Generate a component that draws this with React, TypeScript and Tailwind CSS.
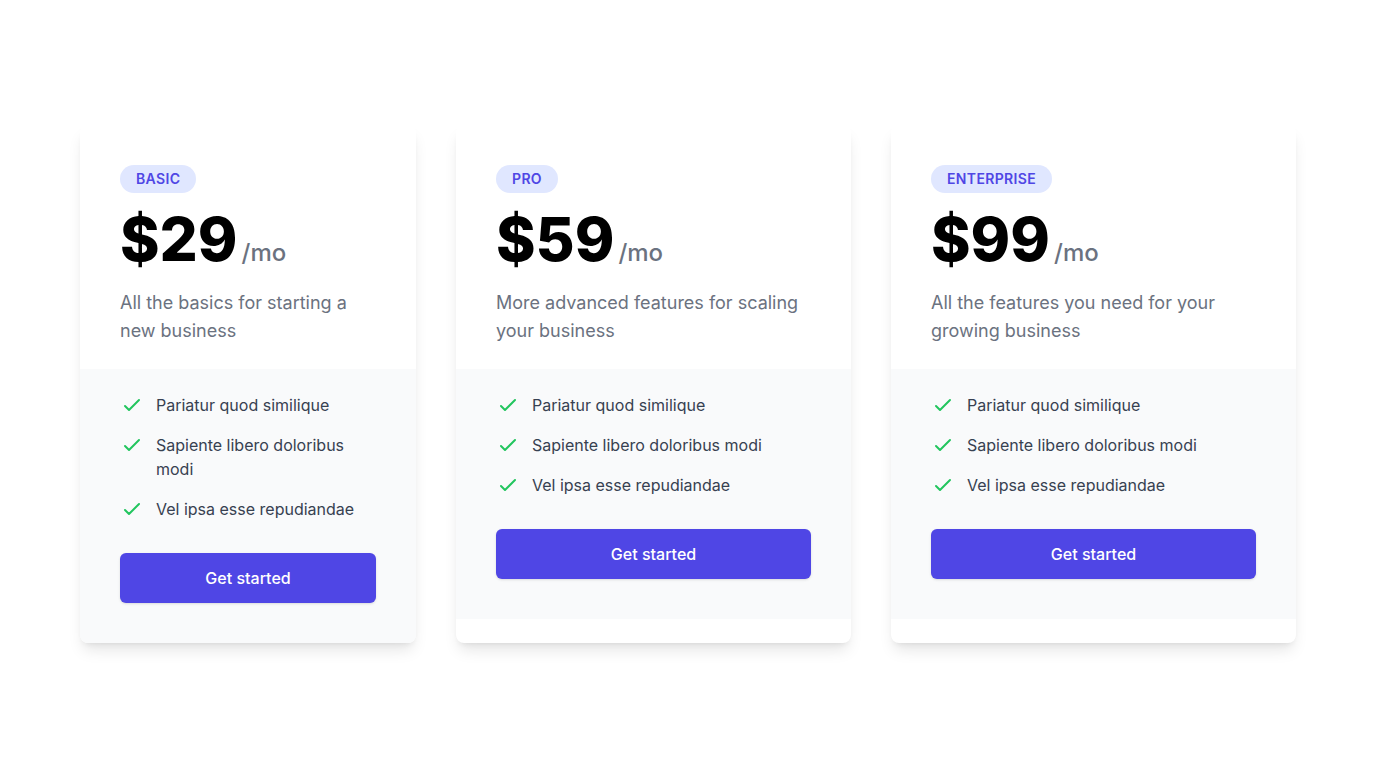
import React from 'react';

const plans = [
  {
    name: 'Basic',
    price: '$29',
    description: 'All the basics for starting a new business',
    width: 'w-[336px]',
  },
  {
    name: 'Pro',
    price: '$59',
    description: 'More advanced features for scaling your business',
    width: 'w-[395px]',
  },
  {
    name: 'Enterprise',
    price: '$99',
    description: 'All the features you need for your growing business',
    width: 'w-[405px]',
  },
];

const features = ['Pariatur quod similique', 'Sapiente libero doloribus modi', 'Vel ipsa esse repudiandae'];

const CheckIcon = () => (
  <svg className="h-6 w-6 shrink-0 text-[#22c55e]" fill="none" viewBox="0 0 24 24" stroke="currentColor" strokeWidth={2}>
    <path strokeLinecap="round" strokeLinejoin="round" d="M5 13l4 4L19 7" />
  </svg>
);

const App = () => {
  return (
    <div className="min-h-screen bg-white flex items-center font-['Inter',sans-serif]">
      <div className="w-full max-w-7xl mx-auto px-8">
        <div className="flex gap-10 items-stretch">
          {plans.map((plan) => (
            <div key={plan.name} className={`${plan.width} shrink-0 rounded-lg bg-white shadow-lg overflow-hidden`}>
              {/* Header */}
              <div className="bg-white px-10 pt-10 pb-6">
                <span className="inline-flex rounded-full bg-[#e0e7ff] px-4 py-1 text-sm font-semibold uppercase tracking-wide text-[#4f46e5]">
                  {plan.name}
                </span>
                <div className="mt-4 flex items-baseline text-6xl font-extrabold text-black">
                  {plan.price}
                  <span className="ml-1 text-2xl font-medium text-[#6b7280]">/mo</span>
                </div>
                <p className="mt-5 text-lg text-[#6b7280]">{plan.description}</p>
              </div>

              {/* Features */}
              <div className="bg-[#f9fafb] px-10 pt-6 pb-10">
                <ul className="space-y-4">
                  {features.map((feature) => (
                    <li key={feature} className="flex items-start">
                      <CheckIcon />
                      <p className="ml-3 text-base text-[#374151]">{feature}</p>
                    </li>
                  ))}
                </ul>
                <div className="mt-8">
                  <a
                    href="#"
                    className="flex h-[50px] items-center justify-center rounded-md bg-[#4f46e5] px-5 text-base font-medium text-white shadow"
                  >
                    Get started
                  </a>
                </div>
              </div>
            </div>
          ))}
        </div>
      </div>
    </div>
  );
};

export default App;
